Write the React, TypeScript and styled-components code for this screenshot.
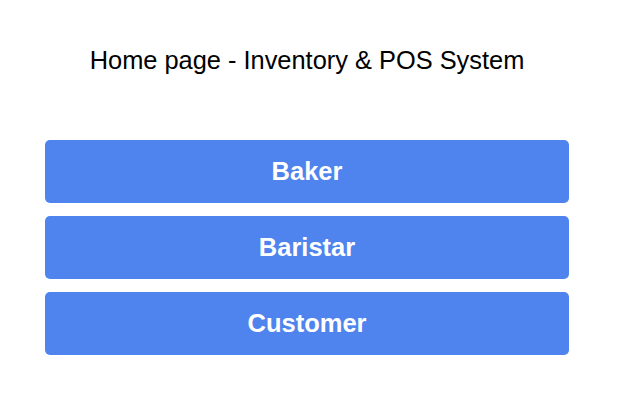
import React from 'react'
import styled, { createGlobalStyle } from 'styled-components'

const GlobalStyle = createGlobalStyle`
  body {
    margin: 0;
    background: #ffffff;
    font-family: "Liberation Sans", Arial, sans-serif;
  }
`

const Page = styled.div`
  width: 524px;
  margin-left: 45px;
  padding-top: 44px;
  display: flex;
  flex-direction: column;
  align-items: stretch;
`

const Title = styled.h1`
  margin: 0 0 64px;
  font-size: 25.4px;
  font-weight: 400;
  line-height: 32px;
  color: #000;
  text-align: center;
`

const RoleList = styled.div`
  display: flex;
  flex-direction: column;
  gap: 13px;
`

const RoleButton = styled.button`
  height: 63px;
  border: none;
  border-radius: 5px;
  background: #4f83ee;
  color: #ffffff;
  font-family: "Liberation Sans", Arial, sans-serif;
  font-size: 25.5px;
  font-weight: 700;
  cursor: pointer;
`

const roles = ['Baker', 'Baristar', 'Customer']

const App = () => (
  <>
    <GlobalStyle />
    <Page>
      <Title>Home page - Inventory &amp; POS System</Title>
      <RoleList>
        {roles.map((role) => (
          <RoleButton key={role}>{role}</RoleButton>
        ))}
      </RoleList>
    </Page>
  </>
)

export default App
